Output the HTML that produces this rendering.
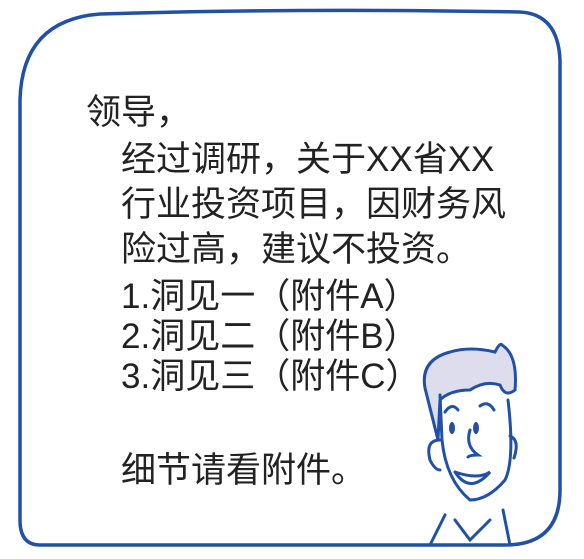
<!DOCTYPE html>
<html><head><meta charset="utf-8"><style>
body{margin:0;width:584px;height:559px;background:#fff;position:relative;overflow:hidden;font-family:"Liberation Sans","Noto Sans CJK SC",sans-serif;color:#222}
.t{position:absolute;font-size:35px;line-height:1;white-space:nowrap}
</style></head><body>
<svg width="584" height="559" style="position:absolute;left:0;top:0">
<path d="M20 100 Q22 20 100 14 Q300 8 520 12 Q558 14 560 60 L560 490 Q560 545 505 545 L40 545 Q20 545 20 520 Z" fill="none" stroke="#2050a8" stroke-width="3.5"/>
<g fill="none" stroke="#2050a8" stroke-width="3" stroke-linecap="round">
<path d="M425 388 Q420 360 450 352 Q470 346 495 352 Q500 342 502 345 Q518 355 515 390 Q505 398 500 385 Q485 380 470 390 Q450 390 440 400 L438 440 Z" fill="#dde"/>
<path d="M440 395 L442 440 Q446 480 470 500 Q488 500 505 480 Q515 460 508 400"/>
<path d="M440 440 Q425 440 430 460 Q435 470 440 470"/>
<path d="M510 436 Q520 440 514 458"/>
<path d="M445 412 Q452 402 458 410"/>
<path d="M480 406 Q488 400 494 410"/>
<path d="M470 430 Q465 446 478 455 Q470 455 468 457"/>
<path d="M455 472 Q470 495 490 472 Q478 480 455 472"/>
<path d="M445 515 L430 545 M503 510 L510 545 M455 520 L470 540 L490 520"/>
</g>
<ellipse cx="452" cy="428" rx="3" ry="6" fill="#2050a8"/>
<ellipse cx="476" cy="428" rx="3" ry="6" fill="#2050a8"/>
</svg>
<div class="t" style="left:86px;top:95px">领导，</div>
<div class="t" style="left:121px;top:142px">经过调研，关于XX省XX</div>
<div class="t" style="left:121px;top:187px">行业投资项目，因财务风</div>
<div class="t" style="left:121px;top:232px">险过高，建议不投资。</div>
<div class="t" style="left:121px;top:279px">1.洞见一（附件A）</div>
<div class="t" style="left:121px;top:319px">2.洞见二（附件B）</div>
<div class="t" style="left:121px;top:359px">3.洞见三（附件C）</div>
<div class="t" style="left:121px;top:453px">细节请看附件。</div>
</body></html>
